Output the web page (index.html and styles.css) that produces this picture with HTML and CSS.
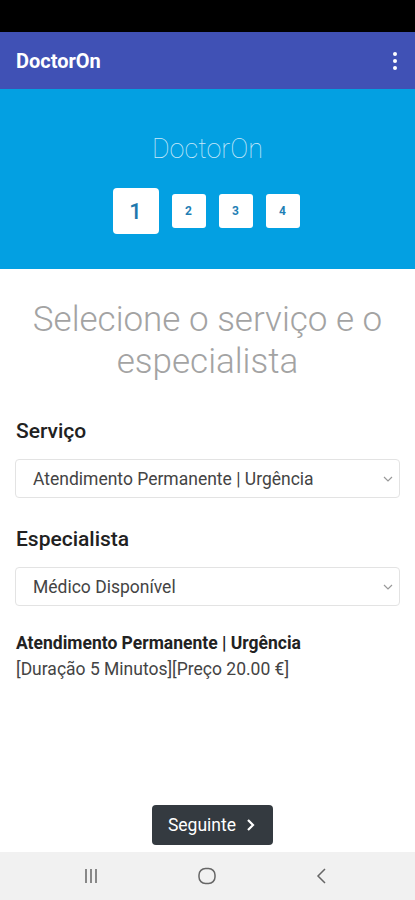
FILE: index.html
```html
<!DOCTYPE html>
<html lang="pt">
<head>
  <meta charset="UTF-8">
  <meta name="viewport" content="width=device-width, initial-scale=1.0">
  <title>DoctorOn</title>
  <link rel="stylesheet" href="styles.css">
</head>
<body>
  <div class="status"></div>
  <header class="appbar">
    <span class="appbar-title">DoctorOn</span>
    <span class="menu"><i></i><i></i><i></i></span>
  </header>

  <section class="hero">
    <p class="hero-title">DoctorOn</p>
    <div class="steps">
      <span class="step active">1</span>
      <span class="step">2</span>
      <span class="step">3</span>
      <span class="step">4</span>
    </div>
  </section>

  <main class="content">
    <h1 class="heading">Selecione o serviço e o especialista</h1>

    <label class="label">Serviço</label>
    <div class="select">
      <span>Atendimento Permanente | Urgência</span>
      <svg width="10" height="6" viewBox="0 0 10 6"><path d="M1 1l4 4 4-4" fill="none" stroke="#999" stroke-width="1.2"/></svg>
    </div>

    <label class="label">Especialista</label>
    <div class="select">
      <span>Médico Disponível</span>
      <svg width="10" height="6" viewBox="0 0 10 6"><path d="M1 1l4 4 4-4" fill="none" stroke="#999" stroke-width="1.2"/></svg>
    </div>

    <div class="summary">
      <p class="summary-name">Atendimento Permanente | Urgência</p>
      <p class="summary-info">[Duração 5 Minutos][Preço 20.00 €]</p>
    </div>
  </main>

  <div class="actions">
    <button class="next">Seguinte
      <svg width="10" height="14" viewBox="0 0 10 14"><path d="M2 2l5 5-5 5" fill="none" stroke="#fff" stroke-width="2.2"/></svg>
    </button>
  </div>

  <nav class="navbar">
    <svg width="18" height="18" viewBox="0 0 18 18"><path d="M4 2v14M9 2v14M14 2v14" stroke="#666" stroke-width="1.5"/></svg>
    <svg width="20" height="20" viewBox="0 0 20 20"><rect x="2" y="2.5" width="16" height="15" rx="6.5" fill="none" stroke="#666" stroke-width="1.5"/></svg>
    <svg width="18" height="18" viewBox="0 0 18 18"><path d="M12 2L5 9l7 7" fill="none" stroke="#666" stroke-width="1.5"/></svg>
  </nav>
</body>
</html>
```

FILE: styles.css
```css
* {
  margin: 0;
  padding: 0;
  box-sizing: border-box;
}
body {
  width: 415px;
  height: 900px;
  display: flex;
  flex-direction: column;
  font-family: Roboto, "Noto Sans", sans-serif;
  background: #fff;
  overflow: hidden;
}
.status {
  height: 32px;
  background: #000;
}
.appbar {
  height: 57px;
  background: #4051b5;
  display: flex;
  align-items: center;
  justify-content: space-between;
  padding: 0 18px 0 16px;
}
.appbar-title {
  color: #fff;
  font-size: 20px;
  font-weight: 700;
}
.menu {
  display: flex;
  flex-direction: column;
  gap: 3px;
}
.menu i {
  width: 4px;
  height: 4px;
  border-radius: 50%;
  background: #fff;
}
.hero {
  height: 180px;
  background: #03a0e2;
  display: flex;
  flex-direction: column;
  align-items: center;
  padding-top: 45px;
}
.hero-title {
  color: #c9e9fa;
  font-size: 27px;
  font-weight: 100;
  line-height: 30px;
}
.steps {
  display: flex;
  align-items: center;
  gap: 13px;
  margin-top: 24px;
  margin-right: 3px;
}
.step {
  width: 34px;
  height: 34px;
  background: #fff;
  border-radius: 3px;
  display: flex;
  align-items: center;
  justify-content: center;
  color: #1f7fb5;
  font-size: 12px;
  font-weight: 700;
}
.step.active {
  width: 46px;
  height: 46px;
  font-size: 22px;
  font-weight: 500;
  color: #1e79ad;
  border-radius: 4px;
}
.content {
  flex: 1;
  padding: 30px 15px 0 15px;
}
.heading {
  text-align: center;
  font-size: 35px;
  font-weight: 300;
  color: #a3a3a3;
  line-height: 42px;
  margin-bottom: 35px;
}
.label {
  display: block;
  font-size: 21px;
  font-weight: 500;
  color: #212121;
  line-height: 26px;
  margin-left: 1px;
  margin-bottom: 15px;
}
.select {
  height: 39px;
  border: 1px solid #e3e3e3;
  border-radius: 4px;
  display: flex;
  align-items: center;
  justify-content: space-between;
  padding: 0 6px 0 17px;
  font-size: 17.5px;
  color: #444;
  margin-bottom: 28px;
}
.summary {
  margin-top: -4px;
  padding-left: 1px;
  font-size: 17.5px;
  line-height: 26px;
}
.summary-name {
  font-weight: 700;
  color: #222;
}
.summary-info {
  color: #444;
}
.actions {
  display: flex;
  justify-content: center;
  padding: 0 0 7px 9px;
}
.next {
  width: 121px;
  height: 40px;
  background: #343a40;
  color: #fff;
  border: none;
  border-radius: 4px;
  font-family: Roboto, sans-serif;
  font-size: 17.5px;
  display: flex;
  align-items: center;
  justify-content: center;
  gap: 10px;
}
.navbar {
  height: 48px;
  background: #f1f1f1;
  display: flex;
  align-items: center;
  justify-content: space-between;
  padding: 0 84px 0 82px;
}
```
